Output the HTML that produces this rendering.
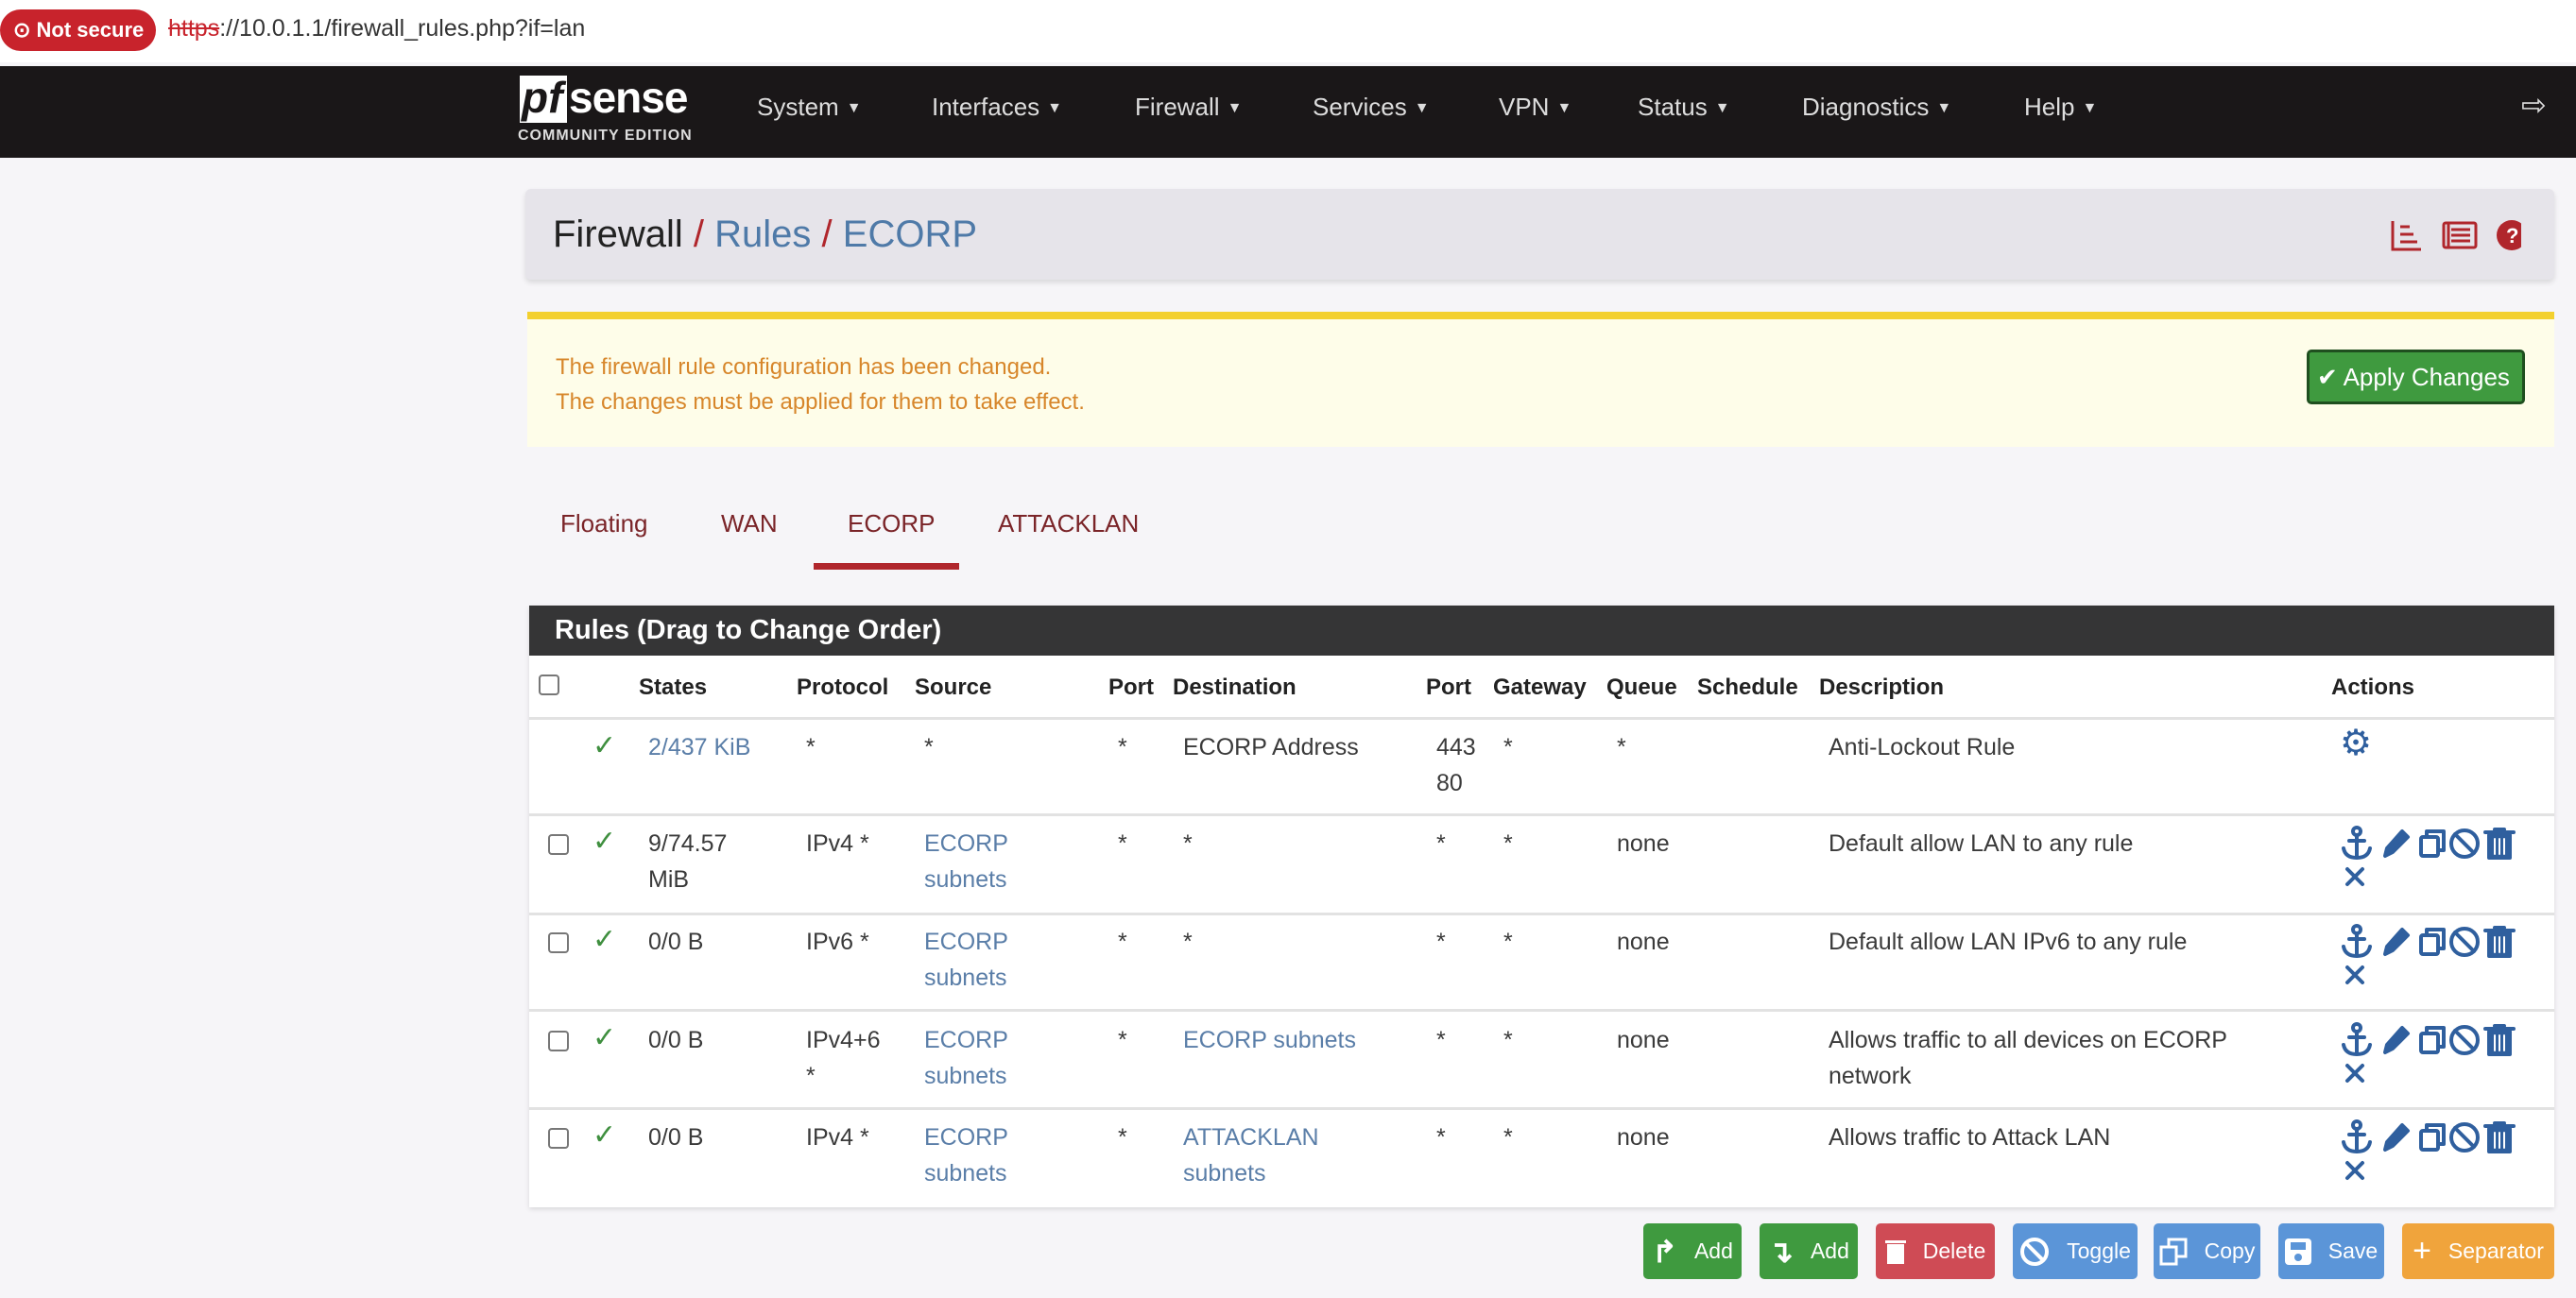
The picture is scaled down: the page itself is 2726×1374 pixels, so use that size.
<!DOCTYPE html>
<html><head><meta charset="utf-8"><style>
*{margin:0;padding:0;box-sizing:border-box}
body{width:2726px;height:1374px;background:#f6f5f8;font-family:"Liberation Sans",sans-serif;position:relative;overflow:hidden;color:#222}
.a{position:absolute;white-space:nowrap}
.nav{font-size:26px;color:#ddd}
.car{font-size:16px;margin-left:8px;vertical-align:3px}
.th{font-size:24px;font-weight:bold;color:#222;top:714px}
.td{font-size:25px;color:#3a3a3a;line-height:38px}
.lk{color:#5a7ea8}
.ck{color:#3f8f3f;font-size:30px}
.cb{width:22px;height:22px;border:2px solid #777;border-radius:4px;background:#fff}
.sep{left:560px;width:2143px;height:3px;background:#e2e2e2}
.btn{position:absolute;top:1295px;height:59px;border-radius:5px;color:#fff;font-size:23px;display:flex;align-items:center;justify-content:center;gap:18px}
</style></head><body>
<svg width="0" height="0" style="position:absolute"><defs>
<g id="acts" fill="none" stroke="#2f5f9e" stroke-width="4" stroke-linecap="round" stroke-linejoin="round">
<circle cx="18" cy="6" r="4"/><path d="M18 10V34M10 16H26M4 24Q6 34 18 34Q30 34 32 24"/>
<path d="M48 32L50 24L66 6L72 12L56 28Z" fill="#2f5f9e"/>
<rect x="86" y="12" width="18" height="20" rx="2"/><path d="M92 12V6H110V26H104"/>
<circle cx="132" cy="19" r="14"/><path d="M122 9L142 29"/>
<rect x="158" y="10" width="22" height="24" fill="#2f5f9e"/><path d="M154 7H184M164 4H174"/><path d="M164 14V30M169 14V30M174 14V30" stroke="#fff" stroke-width="2"/>
<path d="M8 46L24 62M24 46L8 62"/>
</g></defs></svg>
<!-- address bar -->
<div class="a" style="left:0;top:0;width:2726px;height:66px;background:#fff"></div>
<div class="a" style="left:0;top:10px;width:165px;height:44px;background:#c8232c;border-radius:22px;color:#fff;font-size:22px;font-weight:bold;line-height:44px;padding-left:14px">⊙ Not secure</div>
<div class="a" style="left:178px;top:16px;font-size:25px;color:#333"><span style="color:#c8232c;text-decoration:line-through">https</span>://10.0.1.1/firewall_rules.php?if=lan</div>
<!-- navbar -->
<div class="a" style="left:0;top:70px;width:2726px;height:97px;background:#1a1718"></div>
<div class="a" style="left:550px;top:80px;width:50px;height:50px;background:#fff"></div>
<div class="a" style="left:552px;top:76px;font-size:46px;font-weight:bold;color:#1a1718;font-style:italic">pf</div>
<div class="a" style="left:602px;top:76px;font-size:46px;font-weight:bold;color:#fff;letter-spacing:-1px">sense</div>
<div class="a" style="left:548px;top:135px;font-size:16px;font-weight:bold;color:#ddd;letter-spacing:1px">COMMUNITY EDITION</div>
<div class="a nav" style="left:801px;top:98px">System<span class="car">▼</span></div>
<div class="a nav" style="left:986px;top:98px">Interfaces<span class="car">▼</span></div>
<div class="a nav" style="left:1201px;top:98px">Firewall<span class="car">▼</span></div>
<div class="a nav" style="left:1389px;top:98px">Services<span class="car">▼</span></div>
<div class="a nav" style="left:1586px;top:98px">VPN<span class="car">▼</span></div>
<div class="a nav" style="left:1733px;top:98px">Status<span class="car">▼</span></div>
<div class="a nav" style="left:1907px;top:98px">Diagnostics<span class="car">▼</span></div>
<div class="a nav" style="left:2142px;top:98px">Help<span class="car">▼</span></div>
<div class="a" style="left:2668px;top:92px;font-size:32px;color:#ddd">⇨</div>
<!-- breadcrumb -->
<div class="a" style="left:556px;top:200px;width:2147px;height:96px;background:#e6e4ea;border-radius:6px;box-shadow:0 3px 6px rgba(0,0,0,.12)"></div>
<div class="a" style="left:585px;top:226px;font-size:40px;color:#222">Firewall <span style="color:#b0262c">/</span> <span style="color:#4f7aa8">Rules</span> <span style="color:#b0262c">/</span> <span style="color:#4f7aa8">ECORP</span></div>
<svg class="a" style="left:2528px;top:230px" width="140" height="40"><g fill="none" stroke="#b0262c" stroke-width="3"><path d="M4 4V34H34M12 26H30M12 18H26M12 10H22"/><rect x="58" y="6" width="34" height="26" rx="2"/><path d="M66 13H86M66 19H86M66 25H86M63 6V32"/></g><circle cx="130" cy="19" r="16" fill="#b0262c"/><text x="124" y="27" fill="#fff" font-size="22" font-weight="bold" font-family="Liberation Sans">?</text></svg>
<!-- alert -->
<div class="a" style="left:558px;top:330px;width:2145px;height:143px;background:#fefde9;border-top:8px solid #f3d02e"></div>
<div class="a" style="left:588px;top:370px;font-size:24px;color:#d7862a;line-height:37px">The firewall rule configuration has been changed.<br>The changes must be applied for them to take effect.</div>
<div class="a" style="left:2441px;top:370px;width:231px;height:58px;background:#3f9a3f;border:3px solid #1f4f1f;border-radius:5px;color:#fff;font-size:26px;line-height:52px;padding-left:8px">✔ Apply Changes</div>
<!-- tabs -->
<div class="a" style="left:593px;top:539px;font-size:26px;color:#7a2428">Floating</div>
<div class="a" style="left:763px;top:539px;font-size:26px;color:#7a2428">WAN</div>
<div class="a" style="left:897px;top:539px;font-size:26px;color:#7a2428">ECORP</div>
<div class="a" style="left:1056px;top:539px;font-size:26px;color:#7a2428">ATTACKLAN</div>
<div class="a" style="left:861px;top:596px;width:154px;height:7px;background:#b0262c"></div>
<!-- table -->
<div class="a" style="left:560px;top:641px;width:2143px;height:637px;background:#fff;box-shadow:0 2px 5px rgba(0,0,0,.12)"></div>
<div class="a" style="left:560px;top:641px;width:2143px;height:53px;background:#353536"></div>
<div class="a" style="left:587px;top:651px;font-size:29px;font-weight:bold;color:#fff">Rules (Drag to Change Order)</div>
<div class="a cb" style="left:570px;top:714px"></div>
<div class="a th" style="left:676px">States</div>
<div class="a th" style="left:843px">Protocol</div>
<div class="a th" style="left:968px">Source</div>
<div class="a th" style="left:1173px">Port</div>
<div class="a th" style="left:1241px">Destination</div>
<div class="a th" style="left:1509px">Port</div>
<div class="a th" style="left:1580px">Gateway</div>
<div class="a th" style="left:1700px">Queue</div>
<div class="a th" style="left:1796px">Schedule</div>
<div class="a th" style="left:1925px">Description</div>
<div class="a th" style="left:2467px">Actions</div>
<div class="a sep" style="top:759px"></div>
<div class="a sep" style="top:861px"></div>
<div class="a sep" style="top:966px"></div>
<div class="a sep" style="top:1068px"></div>
<div class="a sep" style="top:1172px"></div>
<!-- row 0 -->
<div class="a ck" style="left:627px;top:772px">✓</div>
<div class="a td lk" style="left:686px;top:772px">2/437 KiB</div>
<div class="a td" style="left:853px;top:772px">*</div>
<div class="a td" style="left:978px;top:772px">*</div>
<div class="a td" style="left:1183px;top:772px">*</div>
<div class="a td" style="left:1252px;top:772px">ECORP Address</div>
<div class="a td" style="left:1520px;top:772px">443<br>80</div>
<div class="a td" style="left:1591px;top:772px">*</div>
<div class="a td" style="left:1711px;top:772px">*</div>
<div class="a td" style="left:1935px;top:772px">Anti-Lockout Rule</div>
<div class="a" style="left:2476px;top:764px;font-size:38px;color:#2f5f9e">⚙</div>
<!-- rows -->
<div class="a cb" style="left:580px;top:883px"></div><div class="a ck" style="left:627px;top:873px">✓</div>
<div class="a td" style="left:686px;top:874px">9/74.57<br>MiB</div>
<div class="a td" style="left:853px;top:874px">IPv4 *</div>
<div class="a td lk" style="left:978px;top:874px">ECORP<br>subnets</div>
<div class="a td" style="left:1183px;top:874px">*</div><div class="a td" style="left:1252px;top:874px">*</div>
<div class="a td" style="left:1520px;top:874px">*</div><div class="a td" style="left:1591px;top:874px">*</div>
<div class="a td" style="left:1711px;top:874px">none</div>
<div class="a td" style="left:1935px;top:874px">Default allow LAN to any rule</div>
<svg class="a" style="left:2476px;top:874px" width="190" height="66"><use href="#acts"/></svg>

<div class="a cb" style="left:580px;top:987px"></div><div class="a ck" style="left:627px;top:977px">✓</div>
<div class="a td" style="left:686px;top:978px">0/0 B</div>
<div class="a td" style="left:853px;top:978px">IPv6 *</div>
<div class="a td lk" style="left:978px;top:978px">ECORP<br>subnets</div>
<div class="a td" style="left:1183px;top:978px">*</div><div class="a td" style="left:1252px;top:978px">*</div>
<div class="a td" style="left:1520px;top:978px">*</div><div class="a td" style="left:1591px;top:978px">*</div>
<div class="a td" style="left:1711px;top:978px">none</div>
<div class="a td" style="left:1935px;top:978px">Default allow LAN IPv6 to any rule</div>
<svg class="a" style="left:2476px;top:978px" width="190" height="66"><use href="#acts"/></svg>

<div class="a cb" style="left:580px;top:1091px"></div><div class="a ck" style="left:627px;top:1081px">✓</div>
<div class="a td" style="left:686px;top:1082px">0/0 B</div>
<div class="a td" style="left:853px;top:1082px">IPv4+6<br>*</div>
<div class="a td lk" style="left:978px;top:1082px">ECORP<br>subnets</div>
<div class="a td" style="left:1183px;top:1082px">*</div><div class="a td lk" style="left:1252px;top:1082px">ECORP subnets</div>
<div class="a td" style="left:1520px;top:1082px">*</div><div class="a td" style="left:1591px;top:1082px">*</div>
<div class="a td" style="left:1711px;top:1082px">none</div>
<div class="a td" style="left:1935px;top:1082px">Allows traffic to all devices on ECORP<br>network</div>
<svg class="a" style="left:2476px;top:1082px" width="190" height="66"><use href="#acts"/></svg>

<div class="a cb" style="left:580px;top:1194px"></div><div class="a ck" style="left:627px;top:1184px">✓</div>
<div class="a td" style="left:686px;top:1185px">0/0 B</div>
<div class="a td" style="left:853px;top:1185px">IPv4 *</div>
<div class="a td lk" style="left:978px;top:1185px">ECORP<br>subnets</div>
<div class="a td" style="left:1183px;top:1185px">*</div><div class="a td lk" style="left:1252px;top:1185px">ATTACKLAN<br>subnets</div>
<div class="a td" style="left:1520px;top:1185px">*</div><div class="a td" style="left:1591px;top:1185px">*</div>
<div class="a td" style="left:1711px;top:1185px">none</div>
<div class="a td" style="left:1935px;top:1185px">Allows traffic to Attack LAN</div>
<svg class="a" style="left:2476px;top:1185px" width="190" height="66"><use href="#acts"/></svg>
<!-- buttons -->
<div class="btn" style="left:1739px;width:104px;background:#3f9a3f"><span style="font-size:32px;font-weight:bold">↱</span>Add</div>
<div class="btn" style="left:1862px;width:104px;background:#3f9a3f"><span style="font-size:32px;font-weight:bold">↴</span>Add</div>
<div class="btn" style="left:1985px;width:126px;background:#cf4b55"><svg width="22" height="28"><rect x="2" y="6" width="18" height="21" fill="#fff"/><rect x="0" y="2" width="22" height="3" fill="#fff"/></svg>Delete</div>
<div class="btn" style="left:2130px;width:132px;background:#5b95d8"><svg width="32" height="32" fill="none" stroke="#fff" stroke-width="4"><circle cx="16" cy="16" r="13"/><path d="M7 7L25 25"/></svg>Toggle</div>
<div class="btn" style="left:2279px;width:113px;background:#5b95d8"><svg width="30" height="30" fill="none" stroke="#fff" stroke-width="3"><rect x="2" y="10" width="16" height="18"/><path d="M10 10V2H28V20H18"/></svg>Copy</div>
<div class="btn" style="left:2411px;width:112px;background:#5b95d8"><svg width="28" height="28"><rect x="0" y="0" width="28" height="28" rx="4" fill="#fff"/><rect x="6" y="4" width="16" height="8" fill="#5b95d8"/><circle cx="14" cy="20" r="4" fill="#5b95d8"/></svg>Save</div>
<div class="btn" style="left:2542px;width:161px;background:#f0a43c"><span style="font-size:34px">+</span>Separator</div>
</body></html>
